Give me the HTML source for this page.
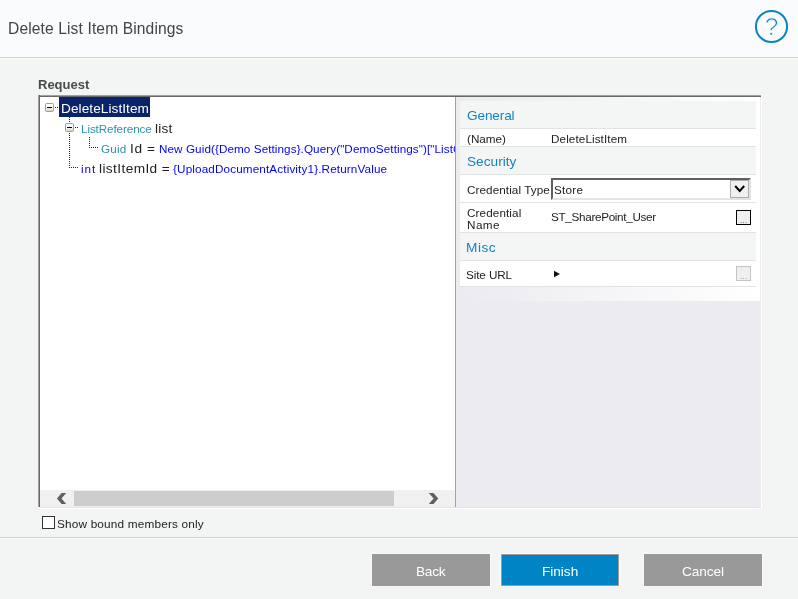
<!DOCTYPE html>
<html lang="en">
<head>
<meta charset="utf-8">
<title>Delete List Item Bindings</title>
<style>
*{box-sizing:border-box;margin:0;padding:0}
html,body{width:798px;height:599px;overflow:hidden}
body{position:relative;background:#f3f5f4;font-family:"Liberation Sans",sans-serif;color:#1e1e1e}
.abs{position:absolute}
.t{position:absolute;white-space:nowrap;line-height:20px;height:20px;will-change:transform}
#hdr{left:0;top:0;width:798px;height:57px;background:#fafbfc}
#hdrline{left:0;top:56px;width:798px;height:3px;background:linear-gradient(#fdfdfe 0,#fdfdfe 1px,#cdcfce 1px,#cdcfce 2px,#fdfdf8 2px,#fdfdf8 3px)}
#title{font-size:15.6px;color:#444}
#req{font-size:13px;font-weight:bold;color:#4a4a4a}
/* container */
#box{left:38px;top:95px;width:724px;height:414px;background:#fff}
#btop{left:38px;top:95px;width:723px;height:2px;background:linear-gradient(#a0a0a0 0,#a0a0a0 1px,#696969 1px,#696969 2px)}
#bleft{left:38px;top:95px;width:2px;height:412px;background:linear-gradient(to right,#a0a0a0 0,#a0a0a0 1px,#696969 1px,#696969 2px)}
#tree{left:40px;top:97px;width:415px;height:393px;background:#fff;overflow:hidden}
#split{left:455px;top:97px;width:1px;height:410px;background:#a0a0a6}
#panel{left:456px;top:97px;width:304px;height:410px;background:#ebebf0}
#pgwhite{left:456px;top:97px;width:304px;height:204px;background:linear-gradient(to right,#ebebf0,#ffffff)}
.sel{left:59px;top:97px;width:91px;height:20px;background:#0a246a}
.tr{font-size:13.65px;color:#1e1e1e}
.ty{font-size:11.7px;color:#2b91af}
.ex{font-size:11.7px;color:#0000ff}
.vd{position:absolute;width:1px;background-image:repeating-linear-gradient(to bottom,#222 0,#222 1px,transparent 1px,transparent 2px)}
.hd{position:absolute;height:1px;background-image:repeating-linear-gradient(to right,#222 0,#222 1px,transparent 1px,transparent 2px)}
.exp{position:absolute;width:9px;height:9px;border:1px solid #78a3de;border-radius:1.5px;background:linear-gradient(#fff 0,#fff 45%,#d6d2c4 100%)}
.exp i{position:absolute;left:1px;top:3px;width:5px;height:1px;background:#000}
/* scrollbar */
#sb{left:40px;top:490px;width:415px;height:17px;background:#f0f0f0}
#thumb{left:74px;top:491px;width:320px;height:15px;background:#cdcdcd}
/* grid */
.hrow{position:absolute;left:460px;width:296px;background:#f4f5f5}
.row{position:absolute;left:460px;width:296px;background:#fff}
.sep{position:absolute;left:460px;width:296px;height:1px;background:#e2e2e2}
.cat{font-size:13.65px;color:#1583c0}
.pg{font-size:11.7px;color:#222}
.btn{position:absolute;width:118px;height:32px;top:554px;box-shadow:0 0 0 1px #f8f9f9}
.bt{color:#fff;font-size:13.65px}
</style>
<style id="fit">
/*FIT*/
#t1{left:61px;top:99px;letter-spacing:0.061px}
#t2a{left:81px;top:119px;letter-spacing:-0.11px}
#t2b{left:155px;top:119px;letter-spacing:0.242px}
#t3a{left:101px;top:139px;letter-spacing:0.195px}
#t3b{left:130px;top:139px;letter-spacing:0.631px}
#t3c{left:119px;top:2px;letter-spacing:0.081px}
#t4a{left:81px;top:159px;letter-spacing:0.935px}
#t4b{left:99px;top:159px;letter-spacing:0.4px}
#t4c{left:173px;top:159px;letter-spacing:0.142px}
#c1{left:467px;top:106px;letter-spacing:-0.15px}
#p1a{left:467px;top:129px;letter-spacing:-0.01px}
#p1b{left:551px;top:129px;letter-spacing:0.099px}
#c2{left:467px;top:152px;letter-spacing:0.02px}
#p2a{left:467px;top:180px;letter-spacing:0.08px}
#p2b{left:554px;top:180px;letter-spacing:0.247px}
#p3a{left:467px;top:207px;letter-spacing:0.11px}
#p3a2{left:467px;top:219px;letter-spacing:0.465px}
#p3b{left:551px;top:207px;letter-spacing:-0.309px}
#c3{left:466px;top:238px;letter-spacing:0.518px}
#p4a{left:466px;top:265px;letter-spacing:-0.101px}
#chk{left:57px;top:514px;letter-spacing:0.168px}
#title{left:8px;top:19px;letter-spacing:0.119px}
#req{left:38px;top:75px;letter-spacing:-0.003px}
#b1{left:416px;top:562px;letter-spacing:-0.226px}
#b2{left:542px;top:562px;letter-spacing:-0.029px}
#b3{left:682px;top:562px;letter-spacing:-0.069px}
/*ENDFIT*/
</style>
</head>
<body>
<div class="abs" id="hdr"></div>
<div class="abs" id="hdrline"></div>
<div class="t" id="title">Delete List Item Bindings</div>
<svg class="abs" style="left:752px;top:7px;will-change:transform" width="40" height="40" viewBox="0 0 40 40">
  <circle cx="19.5" cy="19.5" r="15.6" fill="none" stroke="#0a84c1" stroke-width="2"/>
  <text id="qm" x="19.6" y="28" text-anchor="middle" font-family="Liberation Sans, sans-serif" font-size="24.5" fill="#0a84c1" stroke="#fafbfc" stroke-width="0.7" paint-order="fill stroke">?</text>
</svg>

<div class="t" id="req">Request</div>

<div class="abs" id="box"></div>
<div class="abs" id="tree"></div>
<div class="abs" id="panel"></div>
<div class="abs" id="pgwhite"></div>
<div class="abs" id="split"></div>
<div class="abs" style="left:760px;top:97px;width:1px;height:411px;background:#ececec"></div>
<div class="abs" style="left:40px;top:507px;width:721px;height:1px;background:#e3e3e3"></div>
<div class="abs" id="btop"></div>
<div class="abs" id="bleft"></div>

<!-- tree -->
<div class="abs sel"></div>
<div class="exp" style="left:45px;top:103px"><i></i></div>
<div class="hd" style="left:55px;top:107px;width:4px"></div>
<div class="t tr" id="t1" style="color:#fff">DeleteListItem</div>

<div class="vd" style="left:69px;top:117px;height:6px"></div>
<div class="vd" style="left:69px;top:133px;height:35px"></div>
<div class="exp" style="left:65px;top:123px"><i></i></div>
<div class="hd" style="left:75px;top:127px;width:4px"></div>
<div class="t ty" id="t2a">ListReference</div>
<div class="t tr" id="t2b">list</div>

<div class="vd" style="left:89px;top:137px;height:11px"></div>
<div class="hd" style="left:89px;top:147px;width:10px"></div>
<div class="t ty" id="t3a">Guid</div>
<div class="t tr" id="t3b">Id =</div>
<div class="abs" style="left:40px;top:137px;width:415px;height:20px;overflow:hidden"><div class="t ex" id="t3c">New Guid({Demo Settings}.Query("DemoSettings")["ListGuid"])</div></div>

<div class="hd" style="left:69px;top:167px;width:10px"></div>
<div class="t ex" id="t4a">int</div>
<div class="t tr" id="t4b">listItemId =</div>
<div class="t ex" id="t4c">{UploadDocumentActivity1}.ReturnValue</div>

<!-- scrollbar -->
<div class="abs" id="sb"></div>
<div class="abs" id="thumb"></div>
<svg class="abs" style="left:54px;top:490px" width="16" height="17" viewBox="0 0 16 17"><path d="M12.2 3 L7.6 3 L2.9 8.4 L7.6 13.9 L12.2 13.9 L7.5 8.4 Z" fill="#606060"/></svg>
<svg class="abs" style="left:424px;top:490px" width="16" height="17" viewBox="0 0 16 17"><path d="M4.8 3 L9.4 3 L14.3 8.4 L9.4 13.9 L4.8 13.9 L9.6 8.4 Z" fill="#606060"/></svg>

<!-- property grid -->
<div class="hrow" style="top:101px;height:27px"></div>
<div class="t cat" id="c1">General</div>
<div class="sep" style="top:128px"></div>
<div class="row" style="top:129px;height:17px"></div>
<div class="t pg" id="p1a">(Name)</div>
<div class="t pg" id="p1b">DeleteListItem</div>
<div class="sep" style="top:146px"></div>
<div class="hrow" style="top:147px;height:27px"></div>
<div class="t cat" id="c2">Security</div>
<div class="sep" style="top:174px"></div>
<div class="row" style="top:175px;height:27px"></div>
<div class="t pg" id="p2a">Credential Type</div>
<div class="abs" style="left:551px;top:178px;width:200px;height:22px;background:#fff;border-top:2px solid #606060;border-left:2px solid #606060;border-bottom:2px solid #e3e3e3;border-right:2px solid #e3e3e3"></div>
<div class="t pg" id="p2b">Store</div>
<div class="abs" style="left:730px;top:180px;width:19px;height:18px;background:#f0f0f0;border:1px solid #adadad"></div>
<svg class="abs" style="left:730px;top:180px" width="19" height="18" viewBox="0 0 19 18"><path d="M5.2 6 L9.7 10.9 L14.2 6" fill="none" stroke="#000" stroke-width="2"/></svg>
<div class="sep" style="top:202px"></div>
<div class="row" style="top:203px;height:29px"></div>
<div class="t pg" id="p3a" style="line-height:12px;height:12px">Credential</div>
<div class="t pg" id="p3a2" style="line-height:12px;height:12px">Name</div>
<div class="t pg" id="p3b">ST_SharePoint_User</div>
<div class="abs" style="left:736px;top:210px;width:15px;height:15px;background:#efefef;border:1px solid #000"></div>
<div class="t" id="d1" style="left:740px;top:215px;font-size:8px;line-height:12px;height:12px;color:#333;letter-spacing:0.3px">...</div>
<div class="sep" style="top:232px"></div>
<div class="hrow" style="top:233px;height:27px"></div>
<div class="t cat" id="c3">Misc</div>
<div class="sep" style="top:260px"></div>
<div class="row" style="top:261px;height:25px"></div>
<div class="t pg" id="p4a">Site URL</div>
<svg class="abs" style="left:553px;top:270px" width="8" height="8" viewBox="0 0 8 8"><path d="M1 0.8 L7 4 L1 7.2 Z" fill="#111"/></svg>
<div class="abs" style="left:736px;top:266px;width:15px;height:15px;background:#efefef;border:1px solid #c3c3c3"></div>
<div class="t" id="d2" style="left:740px;top:271px;font-size:8px;line-height:12px;height:12px;color:#777;letter-spacing:0.3px">...</div>
<div class="sep" style="top:286px"></div>

<!-- checkbox -->
<div class="abs" style="left:42px;top:516px;width:13px;height:13px;background:#fff;border:1px solid #333"></div>
<div class="t" id="chk" style="font-size:11.8px;color:#222">Show bound members only</div>

<div class="abs" style="left:0;top:536px;width:798px;height:3px;background:linear-gradient(#f6f7f7 0,#f6f7f7 1px,#cdcfce 1px,#cdcfce 2px,#fdfdf8 2px,#fdfdf8 3px)"></div>
<div class="btn" style="left:372px;background:#999"></div>
<div class="btn" style="left:501px;background:#0084c5;border:1px solid #a09a98"></div>
<div class="btn" style="left:644px;background:#999"></div>
<div class="t bt" id="b1">Back</div>
<div class="t bt" id="b2">Finish</div>
<div class="t bt" id="b3">Cancel</div>
</body>
</html>
